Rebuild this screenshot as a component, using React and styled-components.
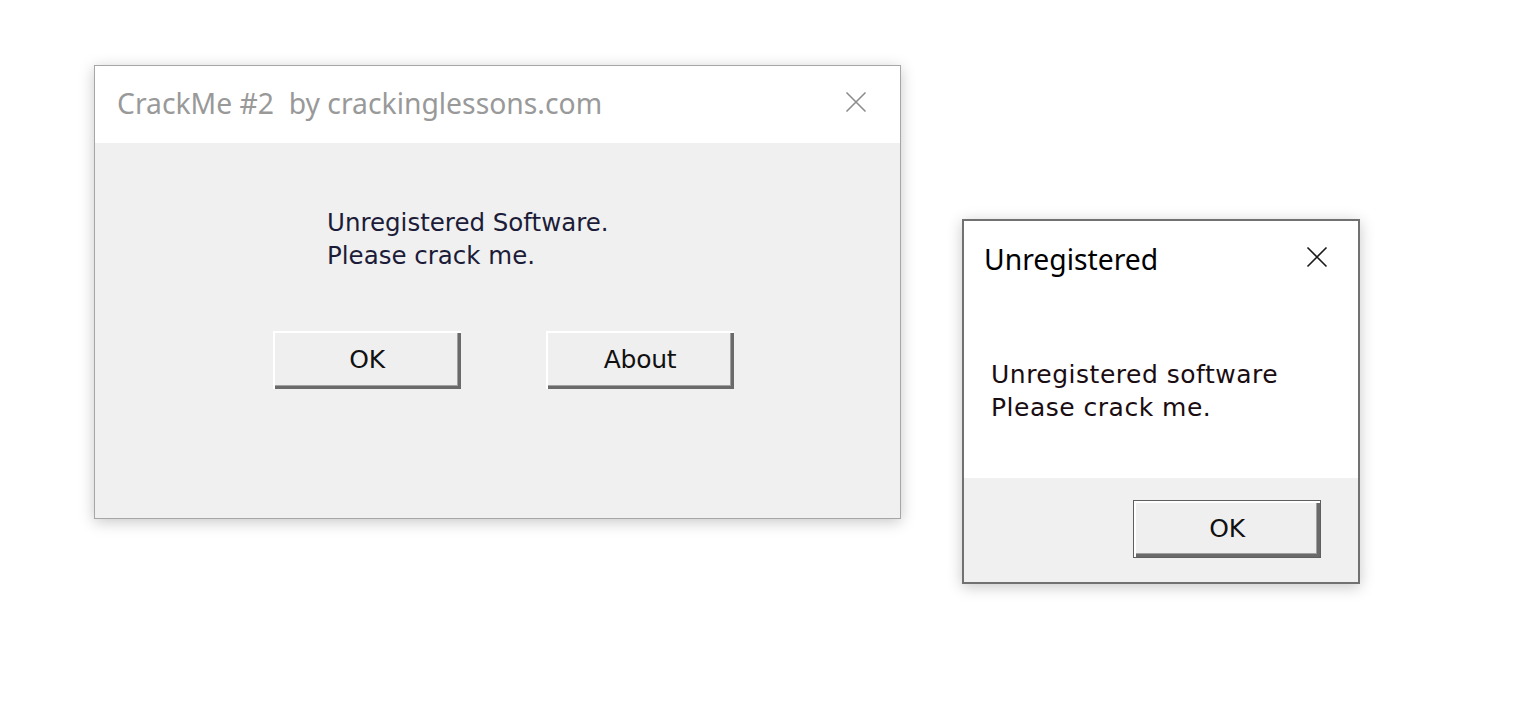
import React from 'react'
import styled, { createGlobalStyle } from 'styled-components'

const GlobalStyle = createGlobalStyle`
  html, body { margin: 0; padding: 0; background: #ffffff; }
  * { box-sizing: border-box; }
`

const Desktop = styled.div`
  position: relative;
  width: 1520px;
  height: 706px;
  background: #ffffff;
  overflow: hidden;
`

// windows sit on a free desktop, so their place is the content itself
const Window = styled.div`
  position: absolute;
  left: ${p => p.x}px;
  top: ${p => p.y}px;
  width: ${p => p.w}px;
  height: ${p => p.h}px;
  display: flex;
  flex-direction: column;
  border: ${p => p.active ? '2px solid #717171' : '1px solid #a6a6a6'};
  background: #f0f0f0;
  box-shadow: 0 3px 14px rgba(0, 0, 0, 0.22);
`

const TitleBar = styled.div`
  display: flex;
  align-items: center;
  justify-content: space-between;
  height: ${p => p.h}px;
  flex: none;
  background: #ffffff;
  padding: ${p => p.pad};
`

const Title = styled.div`
  font-family: "Noto Sans", "Open Sans", sans-serif;
  font-size: 28.3px;
  color: ${p => p.active ? '#000000' : '#999999'};
  white-space: pre;
`

const CloseBtn = styled.svg`
  width: 22px;
  height: 22px;
  flex: none;
  margin-bottom: ${p => p.lift}px;
`

const MainBody = styled.div`
  flex: 1;
  display: flex;
  flex-direction: column;
  padding: 63px 0 0 232px;
`

const Message = styled.div`
  font-family: "DejaVu Sans", sans-serif;
  font-size: ${p => p.size}px;
  line-height: 33px;
  color: ${p => p.color};
  letter-spacing: ${p => p.spacing}px;
`

const ButtonRow = styled.div`
  display: flex;
  gap: 85px;
  margin: 59px 0 0 -54px;
`

const Button = styled.button`
  width: 188px;
  height: 58px;
  background: #efefef;
  font-family: "DejaVu Sans", sans-serif;
  font-size: 25px;
  color: #111;
  border: ${p => p.primary ? '1px solid #5f5f5f' : 'none'};
  box-shadow:
    inset 2px 2px 0 #ffffff,
    inset -3px -3px 0 #6a6a6a,
    inset -4px -4px 0 #a0a0a0;
  padding: 0 0 2px 0;
  letter-spacing: -0.3px;
  cursor: default;
`

const DialogBody = styled.div`
  background: #ffffff;
  flex: none;
  height: ${p => p.h}px;
  padding: 57px 0 0 27px;
`

const Footer = styled.div`
  flex: 1;
  display: flex;
  justify-content: flex-end;
  align-items: flex-start;
  padding: 22px 37px 0 0;
  background: #f0f0f0;
`

const CloseIcon = ({ color, lift = 0 }) => (
  <CloseBtn viewBox="0 0 22 22" lift={lift}>
    <path d="M1.5 1.5 L20.5 20.5 M20.5 1.5 L1.5 20.5" stroke={color} strokeWidth="1.6" fill="none" />
  </CloseBtn>
)

export default function App() {
  return (
    <>
      <GlobalStyle />
      <Desktop>
        <Window x={94} y={65} w={807} h={454}>
          <TitleBar h={77} pad="0 33px 4px 22px">
            <Title>CrackMe #2  by crackinglessons.com</Title>
            <CloseIcon color="#8c8c8c" lift={1} />
          </TitleBar>
          <MainBody>
            <Message size={24.5} color="#1c1c38" spacing={0}>
              Unregistered Software.<br />
              Please crack me.
            </Message>
            <ButtonRow>
              <Button>OK</Button>
              <Button>About</Button>
            </ButtonRow>
          </MainBody>
        </Window>

        <Window x={962} y={219} w={398} h={365} active>
          <TitleBar h={80} pad="0 30px 5px 20px">
            <Title active>Unregistered</Title>
            <CloseIcon color="#1a1a1a" lift={4} />
          </TitleBar>
          <DialogBody h={177}>
            <Message size={25} color="#1a0d12" spacing={0.5}>
              Unregistered software<br />
              Please crack me.
            </Message>
          </DialogBody>
          <Footer>
            <Button primary>OK</Button>
          </Footer>
        </Window>
      </Desktop>
    </>
  )
}
